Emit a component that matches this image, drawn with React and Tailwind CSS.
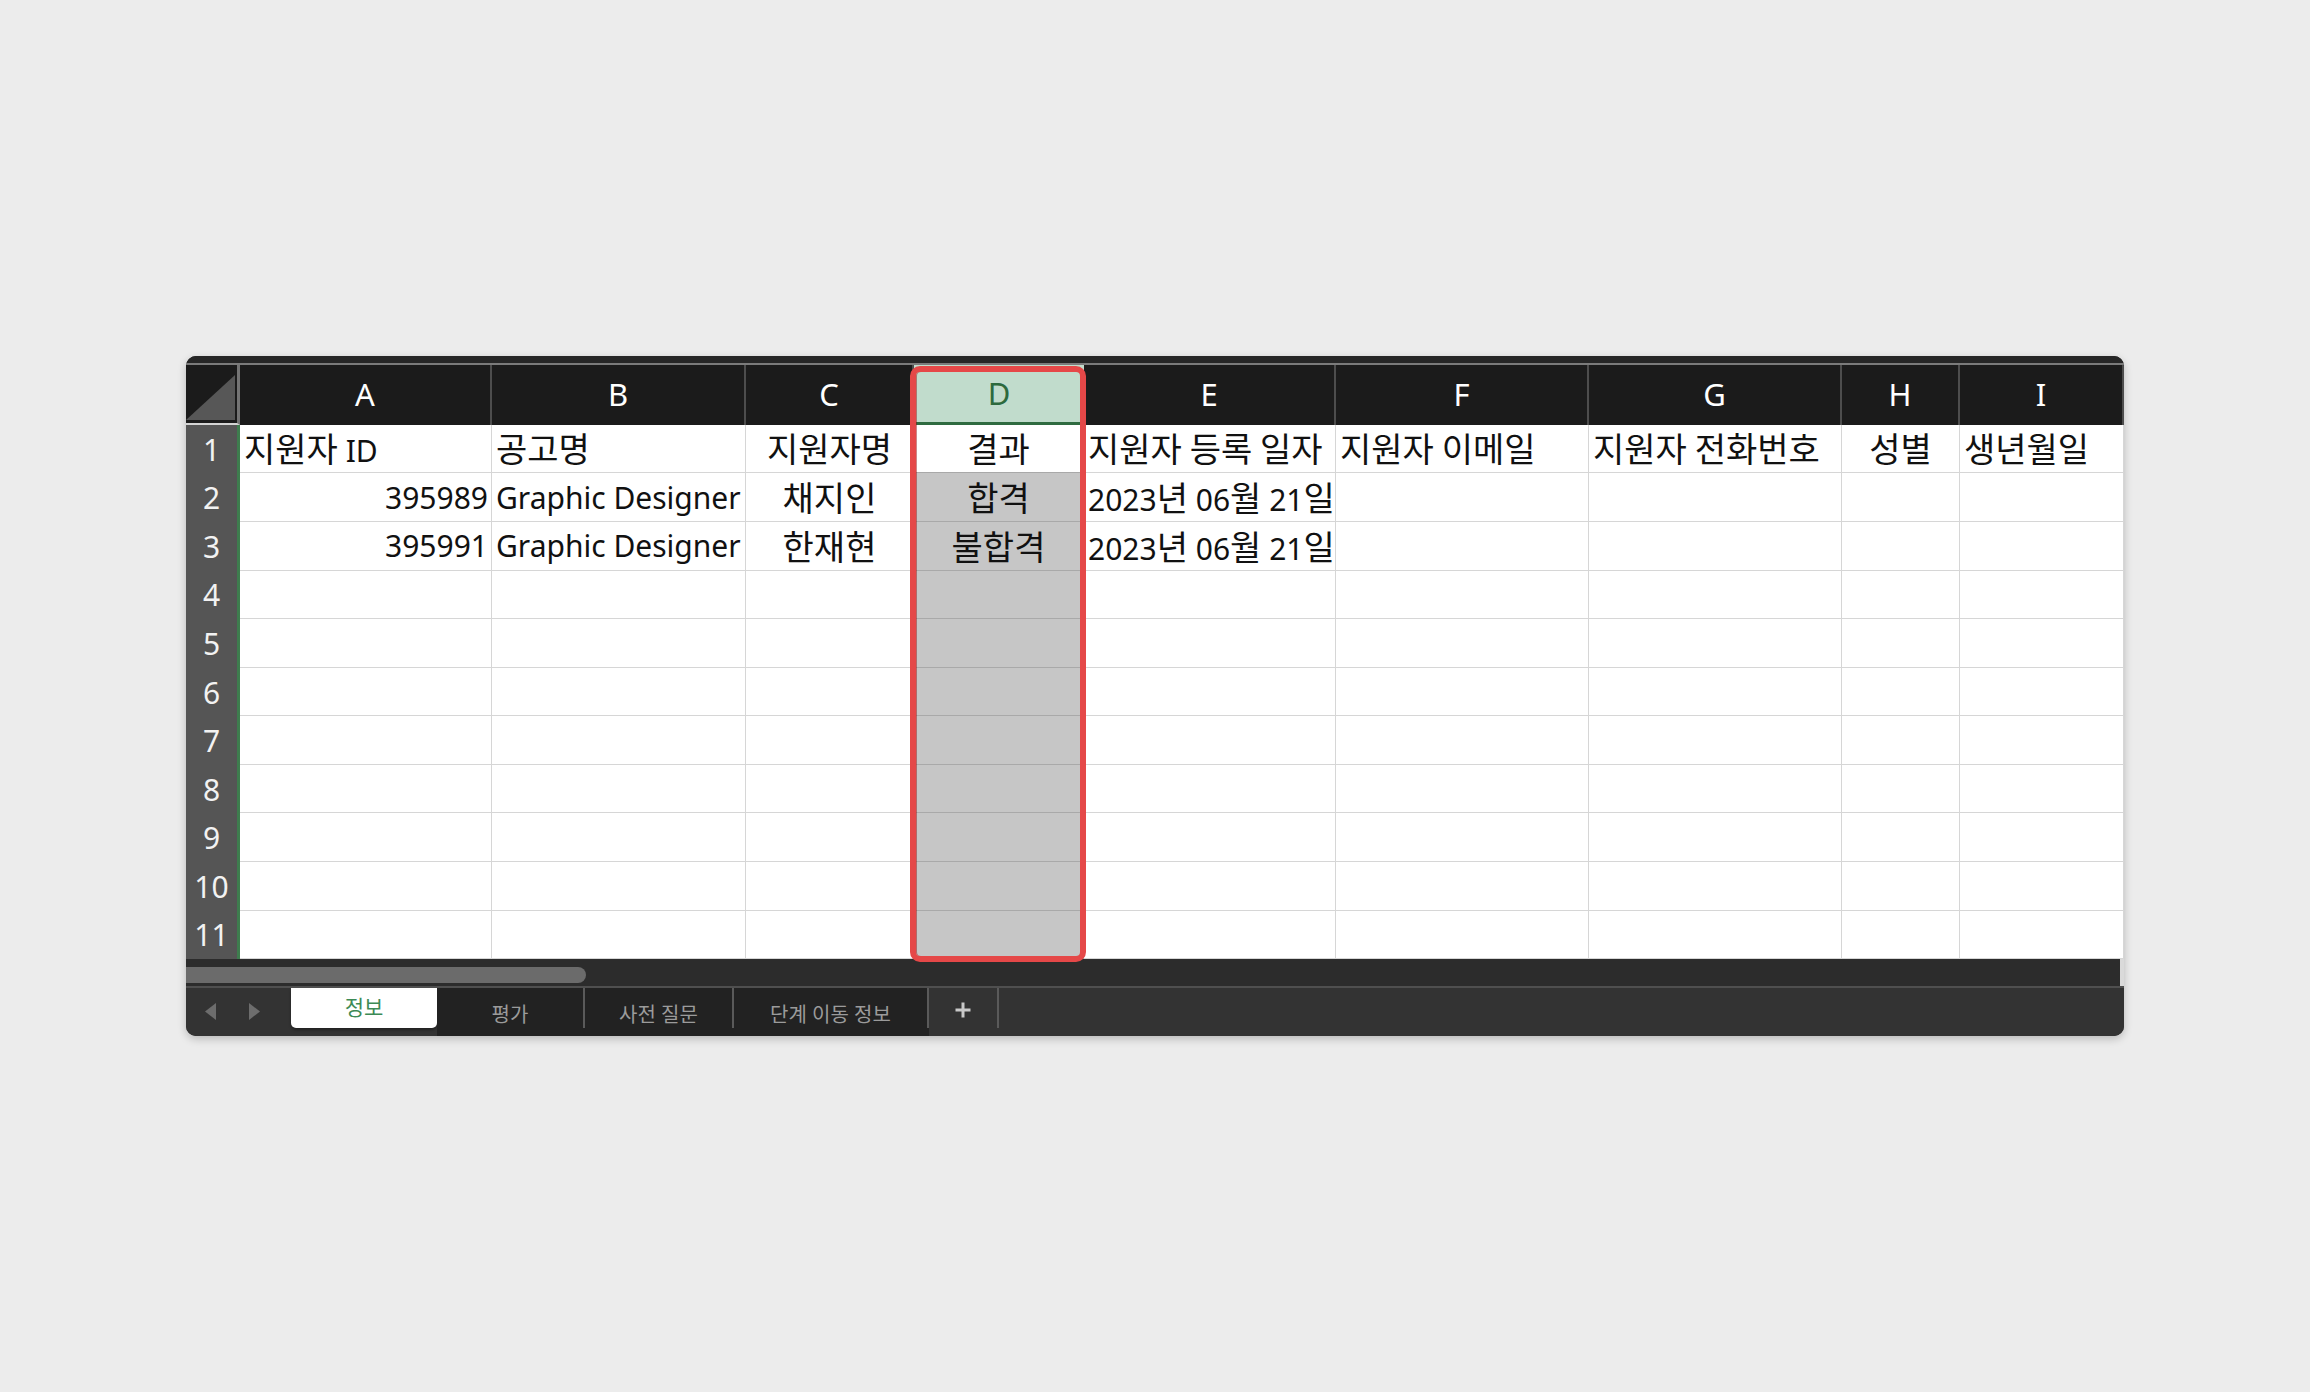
import React from "react";

// Column definitions for the sheet
const COLS = [
  { key: "A", w: "w-[252px]" },
  { key: "B", w: "w-[254px]" },
  { key: "C", w: "w-[168px]" },
  { key: "D", w: "w-[170px]" },
  { key: "E", w: "w-[252px]" },
  { key: "F", w: "w-[253px]" },
  { key: "G", w: "w-[253px]" },
  { key: "H", w: "w-[118px]" },
  { key: "I", w: "w-[164px]" },
];

const L = "justify-start pl-[4px]";
const R = "justify-end pr-[3px]";
const C = "justify-center";

// Alignment per column for the header row and the data rows
const HEAD_ALIGN = [L, L, C, C, L, L, L, C, L];
const DATA_ALIGN = [R, L, C, C, L, L, L, C, L];

const ROWS = [
  ["지원자 ID", "공고명", "지원자명", "결과", "지원자 등록 일자", "지원자 이메일", "지원자 전화번호", "성별", "생년월일"],
  ["395989", "Graphic Designer", "채지인", "합격", "2023년 06월 21일", "", "", "", ""],
  ["395991", "Graphic Designer", "한재현", "불합격", "2023년 06월 21일", "", "", "", ""],
  ...Array.from({ length: 8 }, () => ["", "", "", "", "", "", "", "", ""]),
];

const FONT = "font-['Noto_Sans','Noto_Sans_CJK_KR',sans-serif]";
const HANGUL = /([\uAC00-\uD7A3]+)/;

// Hangul runs are set a little larger than Latin text and digits
function CellText({ text }) {
  const parts = text.split(HANGUL).filter((p) => p !== "");
  return (
    <span className="leading-[1.3]">
      {parts.map((p, i) =>
        HANGUL.test(p) ? (
          <span key={i} className="font-['Noto_Sans_CJK_KR',sans-serif] text-[34px] leading-[1.3]">
            {p}
          </span>
        ) : (
          <span key={i} className="text-[30px] leading-[1.3]">
            {p}
          </span>
        )
      )}
    </span>
  );
}

function ColumnHeader() {
  return (
    <div className="flex h-[60px] bg-[#1b1b1b]">
      <div className="relative w-[54px] h-full bg-[#1b1b1b] border-r-[3px] border-b-[2px] border-r-[#747474] border-b-[#d4d4d4]">
        <svg className="absolute right-[2px] bottom-[3px]" width="49" height="45" viewBox="0 0 49 45">
          <polygon points="0,45 49,0 49,45" fill="#575757" />
        </svg>
      </div>
      {COLS.map((c) =>
        c.key === "D" ? (
          <div
            key={c.key}
            className={`${c.w} h-full flex items-center justify-center bg-[#c1dccc] border-b-[3px] border-b-[#2f6b40] text-[#2d6a3d] text-[31px]`}
          >
            {c.key}
          </div>
        ) : (
          <div
            key={c.key}
            className={`${c.w} h-full flex items-center justify-center border-r-2 border-[#4d4d4d] text-white text-[31px]`}
          >
            {c.key}
          </div>
        )
      )}
    </div>
  );
}

function SheetRow({ index, cells }) {
  return (
    <div className="flex h-[48.6px]">
      <div className="w-[54px] h-full flex items-center justify-center bg-[#555555] border-r-[3px] border-r-[#3e7d4e] text-[#f2f2f2] text-[30px] leading-[1.3]">
        {index + 1}
      </div>
      {cells.map((t, ci) => {
        const isD = COLS[ci].key === "D";
        const shaded = isD && index >= 1;
        const align = index === 0 ? HEAD_ALIGN[ci] : DATA_ALIGN[ci];
        const tone = shaded
          ? "bg-[#c6c6c6] border-[#a9a9a9]"
          : isD
          ? "bg-white border-r-[#d6d6d6] border-b-[#a9a9a9]"
          : "bg-white border-[#d6d6d6]";
        return (
          <div
            key={ci}
            className={`${COLS[ci].w} h-full flex items-center overflow-hidden whitespace-nowrap border-r border-b ${tone} ${align} text-[#111]`}
          >
            {t && <CellText text={t} />}
          </div>
        );
      })}
    </div>
  );
}

function TabBar() {
  return (
    <div className="flex h-[48px] bg-[#333333]">
      <div className="w-[105px] flex items-center justify-start pl-[19px] gap-[33px] pb-[2px]">
        <svg width="11" height="17" viewBox="0 0 11 17">
          <polygon points="11,0 0,8.5 11,17" fill="#6d6d6d" />
        </svg>
        <svg width="11" height="17" viewBox="0 0 11 17">
          <polygon points="0,0 11,8.5 0,17" fill="#6d6d6d" />
        </svg>
      </div>
      <div className="w-[146px] h-[40px] flex items-center justify-center bg-white rounded-b-[5px] shadow-[0_2px_3px_rgba(0,0,0,0.35)] text-[#3d8a55] text-[21px] pb-[2px]">
        정보
      </div>
      <div className="flex bg-[#222222] text-[#9b9b9b] text-[20px]">
        <div className="w-[148px] flex">
          <div className="flex-1 flex items-center justify-center pt-[6px]">평가</div>
          <div className="w-[2px] h-[40px] bg-[#5a5a5a]" />
        </div>
        <div className="w-[149px] flex">
          <div className="flex-1 flex items-center justify-center pt-[6px]">사전 질문</div>
          <div className="w-[2px] h-[40px] bg-[#5a5a5a]" />
        </div>
        <div className="w-[195px] flex">
          <div className="flex-1 flex items-center justify-center pt-[6px]">단계 이동 정보</div>
          <div className="w-[2px] h-[40px] bg-[#5a5a5a]" />
        </div>
      </div>
      <div className="w-[70px] flex">
        <div className="flex-1 flex items-center justify-center pb-[4px]">
          <svg width="18" height="18" viewBox="0 0 18 18">
            <path d="M9 1.5v15M1.5 9h15" stroke="#c9c9c9" strokeWidth="3" />
          </svg>
        </div>
        <div className="w-[2px] h-[40px] bg-[#5a5a5a]" />
      </div>
      <div className="flex-1" />
    </div>
  );
}

export default function App() {
  return (
    <div className={`min-h-screen w-full bg-[#ececec] flex items-center justify-center ${FONT}`}>
      <div className="relative w-[1938px] rounded-[10px] overflow-hidden bg-[#262626] shadow-[0_3px_8px_rgba(0,0,0,0.22)]">
        <div className="h-[7px] bg-[#262626]" />
        <div className="h-[2px] bg-[#7b7b7b]" />
        <ColumnHeader />
        <div className="bg-white">
          {ROWS.map((cells, i) => (
            <SheetRow key={i} index={i} cells={cells} />
          ))}
        </div>
        <div className="flex h-[27px]">
          <div className="flex-1 bg-[#2c2c2c] pt-[8px]">
            <div className="w-[400px] h-[16px] rounded-r-full bg-[#6b6b6b]" />
          </div>
          <div className="w-[4px] bg-[#dadada]" />
        </div>
        <div className="h-[2px] bg-[#4f4f4f]" />
        <TabBar />

        {/* highlight around column D */}
        <div className="pointer-events-none absolute left-[724px] top-[10px] w-[176px] h-[596px] rounded-[10px] border-[6px] border-[#e54848] shadow-[inset_1px_0_0_rgba(150,20,20,0.5)]" />
      </div>
    </div>
  );
}
